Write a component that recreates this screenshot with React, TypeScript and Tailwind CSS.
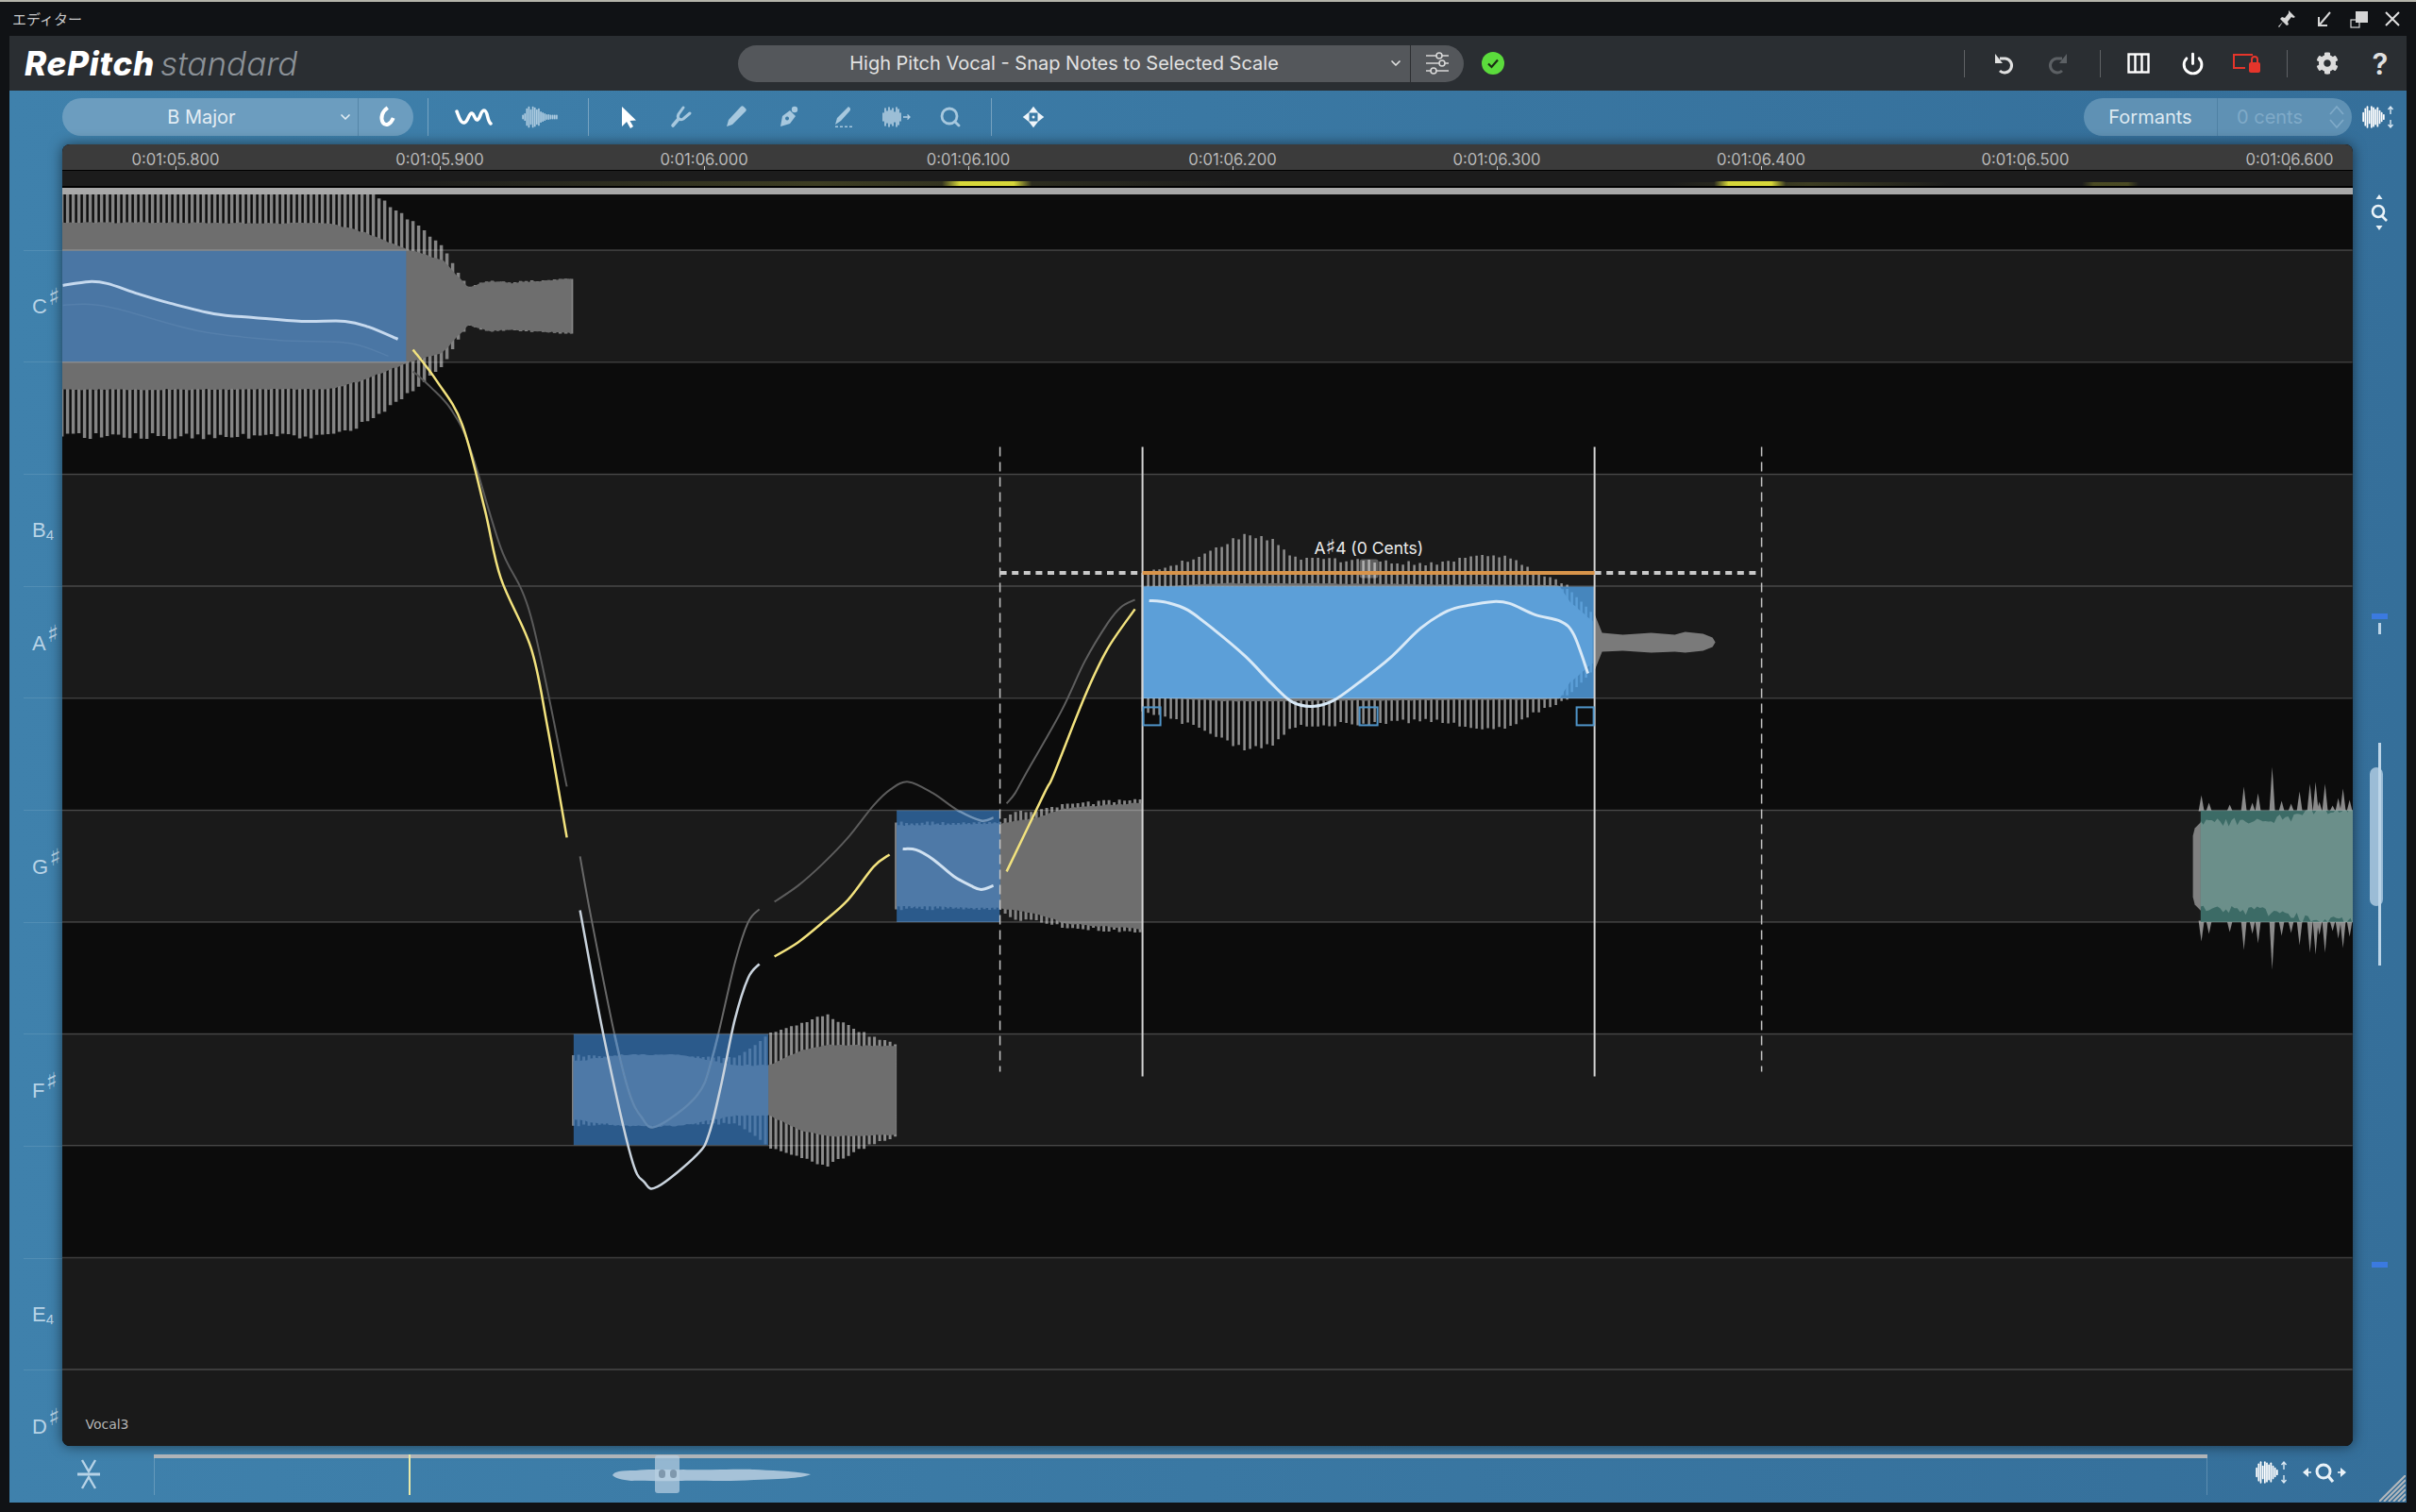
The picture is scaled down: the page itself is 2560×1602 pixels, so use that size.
import { Power, Search, ChevronDown } from 'lucide-react';
import { FaCog } from 'react-icons/fa';

type P = [number, number];

const GRID_LINES = [264.6, 383.3, 502, 620.7, 739.4, 858, 976.7, 1095, 1213.4, 1332, 1450.6];

const ROWS: { h: number; light: boolean }[] = [
  { h: 59, light: false },
  { h: 118.7, light: true },
  { h: 118.7, light: false },
  { h: 118.7, light: true },
  { h: 118.7, light: true },
  { h: 118.7, light: false },
  { h: 118.7, light: true },
  { h: 118.7, light: false },
  { h: 118.7, light: true },
  { h: 118.7, light: false },
  { h: 118.7, light: true },
  { h: 118.7, light: true },
];

const GUTTER_LABELS: { name?: string; sharp?: boolean; sub?: string }[] = [
  { name: 'C', sharp: true },
  {},
  { name: 'B', sub: '4' },
  { name: 'A', sharp: true },
  {},
  { name: 'G', sharp: true },
  {},
  { name: 'F', sharp: true },
  {},
  { name: 'E', sub: '4' },
  { name: 'D', sharp: true },
];

const TIMES = [
  '0:01:05.800',
  '0:01:05.900',
  '0:01:06.000',
  '0:01:06.100',
  '0:01:06.200',
  '0:01:06.300',
  '0:01:06.400',
  '0:01:06.500',
  '0:01:06.600',
];

const rnd = (n: number) => {
  const v = Math.sin(n * 12.9898) * 43758.5453;
  return v - Math.floor(v);
};

const lerp = (pts: P[], x: number) => {
  if (x <= pts[0][0]) return pts[0][1];
  for (let i = 1; i < pts.length; i++) {
    if (x <= pts[i][0]) {
      const t = (x - pts[i - 1][0]) / (pts[i][0] - pts[i - 1][0]);
      return pts[i - 1][1] + (pts[i][1] - pts[i - 1][1]) * t;
    }
  }
  return pts[pts.length - 1][1];
};

// catmull-rom through "x,y x,y" so the pitch curves don't look like polylines
function smooth(points: string) {
  const p = points.split(' ').map((s) => s.split(',').map(Number));
  let d = `M${p[0][0]} ${p[0][1]}`;
  for (let i = 0; i < p.length - 1; i++) {
    const a = p[Math.max(i - 1, 0)];
    const b = p[i];
    const c = p[i + 1];
    const e = p[Math.min(i + 2, p.length - 1)];
    const c1x = b[0] + (c[0] - a[0]) / 6;
    const c1y = b[1] + (c[1] - a[1]) / 6;
    const c2x = c[0] - (e[0] - b[0]) / 6;
    const c2y = c[1] - (e[1] - b[1]) / 6;
    d += `C${c1x.toFixed(1)} ${c1y.toFixed(1)} ${c2x.toFixed(1)} ${c2y.toFixed(1)} ${c[0]} ${c[1]}`;
  }
  return d;
}

// solid part of a waveform, both sides of the center line
function corePoints(env: P[], cy: number, jitter: number) {
  const x0 = env[0][0];
  const x1 = env[env.length - 1][0];
  const top: string[] = [];
  const bottom: string[] = [];
  for (let x = x0; x <= x1; x += 3) {
    const a = lerp(env, x);
    top.push(`${x},${(cy - a - rnd(x) * jitter).toFixed(1)}`);
    bottom.unshift(`${x},${(cy + a + rnd(x + 7) * jitter).toFixed(1)}`);
  }
  return [...top, ...bottom].join(' ');
}

// thin peaks that stick out of the solid part
function combPath(env: P[], cy: number, step: number) {
  const x0 = env[0][0];
  const x1 = env[env.length - 1][0];
  let d = '';
  for (let x = x0; x <= x1; x += step) {
    const a = lerp(env, x) * (0.95 + rnd(x) * 0.05);
    d += `M${x} ${(cy - a).toFixed(1)}V${(cy + a).toFixed(1)}`;
  }
  return d;
}

function Wave(props: {
  outer: P[];
  inner: P[];
  cy: number;
  step: number;
  fill: string;
  line: string;
  width?: number;
  jitter?: number;
}) {
  return (
    <g>
      <path d={combPath(props.outer, props.cy, props.step)} stroke={props.line} strokeWidth={props.width ?? 3} fill="none" />
      <polygon points={corePoints(props.inner, props.cy, props.jitter ?? 1.5)} fill={props.fill} />
    </g>
  );
}

const C_OUT: P[] = [[66, 141], [350, 141], [385, 128], [430, 98], [470, 65], [485, 37], [497, 21], [520, 28], [540, 26], [607, 30]];
const C_IN: P[] = [[66, 88], [350, 87], [385, 78], [430, 60], [470, 48], [485, 31], [497, 19], [520, 26], [540, 24], [607, 28]];
const F_OUT: P[] = [[608, 38], [780, 36], [800, 48], [815, 62], [850, 74], [877, 81], [899, 70], [925, 58], [950, 50]];
const F_IN: P[] = [[608, 30], [660, 37], [720, 37], [780, 26], [815, 26], [850, 42], [877, 48], [950, 46]];
const G_OUT: P[] = [[950, 47], [1060, 47], [1075, 58], [1100, 60], [1127, 66], [1150, 68], [1211, 73]];
const G_IN: P[] = [[950, 42], [1060, 44], [1100, 50], [1127, 60], [1150, 62], [1211, 66]];
const AS_OUT: P[] = [[1211, 77], [1259, 88], [1300, 107], [1320, 118], [1345, 113], [1365, 97], [1380, 90], [1450, 88], [1520, 85], [1560, 93], [1600, 92], [1620, 80], [1650, 67], [1665, 60], [1690, 30]];
const AS_IN: P[] = [[1211, 58], [1300, 62], [1350, 62], [1650, 60], [1664, 56], [1690, 28]];
const AS_LIGHT_OUT: P[] = [[1211, 62], [1650, 61], [1665, 56], [1690, 28]];
const AS_LIGHT_IN: P[] = [[1211, 62], [1652, 61], [1664, 42], [1690, 20]];

const TEAL_SPIKES: P[] = [
  [2333, 75], [2341, 67], [2363, 65], [2378, 84], [2387, 67], [2393, 77], [2408, 105], [2418, 69], [2437, 79],
  [2448, 87], [2454, 89], [2464, 87], [2478, 72], [2483, 82], [2428, 66], [2458, 68], [2472, 64], [2490, 70],
];

const GRAY_LINES = [
  { d: '438,393 457,410 478,433 498,473 531,580 563,653 601,833', stroke: '#5a5a5a' },
  { d: '615,907 627,973 651,1093 667,1157 680,1183 696,1193 739,1160 756,1117 779,1020 793,977 805,963', stroke: '#686868' },
  { d: '821,955 846,938 872,915 899,887 926,853 944,836 963,828 989,840 1015,858 1040,869 1053,866', stroke: '#5c5c5c' },
  { d: '1067,851 1076,840 1087,820 1125,753 1150,700 1174,660 1188,643 1203,635', stroke: '#5f5f5f' },
];

const YELLOW_LINES = [
  '438,370 463,403 490,449 514,539 531,612 563,686 580,767 601,887',
  '821,1013 846,998 872,977 899,953 926,918 943,905',
  '1067,923 1107,840 1117,820 1150,737 1174,687 1203,645',
];

function Canvas() {
  const selectedLine =
    '1218,636 1237,638 1259,646 1287,667 1320,695 1347,723 1369,743 1391,748 1413,742 1440,723 1473,697 1506,665 1534,647 1556,641 1583,637 1600,639 1627,651 1654,658 1668,672 1683,713';
  return (
    <svg className="absolute inset-0 w-full h-full" viewBox="66.4 205.6 2426.3 1326.4">
      <defs>
        <clipPath id="note-c"><rect x="66" y="265" width="365" height="118" /></clipPath>
        <clipPath id="note-f"><rect x="608" y="1095" width="206.5" height="118" /></clipPath>
        <clipPath id="note-g"><rect x="950.5" y="858" width="109.5" height="118.5" /></clipPath>
        <clipPath id="note-as"><rect x="1211" y="621" width="479" height="118.5" /></clipPath>
        <clipPath id="note-t"><rect x="2332" y="858" width="162" height="118.5" /></clipPath>
      </defs>

      {/* first note */}
      <Wave outer={C_OUT} inner={C_IN} cy={324} step={6} fill="#6e6e6e" line="#858585" width={3.5} />
      <g clipPath="url(#note-c)">
        <rect x="66" y="265" width="365" height="118" fill="#4a76a4" />
      </g>
      <path d={smooth('67,302 95,298 114,300 147,311 181,321 227,332 269,336 320,340 366,340 391,346 422,359')} fill="none" stroke="#c6d9ee" strokeWidth="3" />
      <path d={smooth('67,323 95,322 126,327 210,350 295,360 370,363 412,377')} fill="none" stroke="#557fab" strokeWidth="1.5" />

      {/* F sharp */}
      <Wave outer={F_OUT} inner={F_IN} cy={1155} step={5.5} fill="#6e6e6e" line="#8c8c8c" />
      <g clipPath="url(#note-f)">
        <rect x="608" y="1095" width="207" height="118" fill="#2b5a8b" />
        <Wave outer={F_OUT} inner={F_IN} cy={1155} step={5.5} fill="#4e79a7" line="#4e79a7" />
      </g>

      {/* G sharp */}
      <Wave outer={G_OUT} inner={G_IN} cy={917} step={5.5} fill="#6e6e6e" line="#858585" />
      <g clipPath="url(#note-g)">
        <rect x="950" y="858" width="110" height="119" fill="#2b5a8b" />
        <Wave outer={G_OUT} inner={G_IN} cy={917} step={5.5} fill="#4e79a7" line="#4e79a7" />
      </g>

      {/* selected note */}
      <Wave outer={AS_OUT} inner={AS_IN} cy={680} step={6} fill="#707070" line="#8f8f8f" width={2.5} jitter={1} />
      <g clipPath="url(#note-as)">
        <rect x="1211" y="620" width="480" height="120" fill="#4686bd" />
        <Wave outer={AS_LIGHT_OUT} inner={AS_LIGHT_IN} cy={680} step={5} fill="#5c9fd8" line="#5c9fd8" width={2.5} jitter={1} />
      </g>
      <polygon points="1690,650 1698,670 1720,672 1750,670 1775,672 1786,669 1805,671 1815,675 1818,680 1815,685 1805,689 1786,691 1775,690 1750,691 1720,689 1698,690 1690,710" fill="#7a7a7a" />

      {/* note at the right edge */}
      <polygon points="2324,885 2326,877 2333,870 2333,965 2326,958 2324,950" fill="#808080" />
      {TEAL_SPIKES.map(([x, a]) => (
        <g key={x} fill="#8a8a8a">
          <polygon points={`${x - 3},${917 - 58} ${x},${917 - a} ${x + 3},${917 - 58}`} />
          <polygon points={`${x - 3},${917 + 58} ${x},${917 + a + 5} ${x + 3},${917 + 58}`} />
        </g>
      ))}
      <g clipPath="url(#note-t)">
        <rect x="2332" y="858" width="162" height="119" fill="#3c6b66" />
        <polygon points={corePoints([[2332, 40], [2400, 43], [2432, 46], [2445, 53], [2494, 54]], 917, 10)} fill="#6b8f8a" />
      </g>

      {/* grid lines run over the notes */}
      {GRID_LINES.map((y) => (
        <line key={y} x1="66" x2="2493" y1={y} y2={y} stroke="#fff" strokeOpacity="0.2" strokeWidth="1.5" />
      ))}

      {GRAY_LINES.map((l) => (
        <path key={l.d} d={smooth(l.d)} fill="none" stroke={l.stroke} strokeWidth="2" />
      ))}
      {/* the gray curves go faint inside a note */}
      <g clipPath="url(#note-f)">
        <path d={smooth(GRAY_LINES[1].d)} fill="none" stroke="#5f88b3" strokeWidth="2.5" />
      </g>
      <g clipPath="url(#note-g)">
        <path d={smooth(GRAY_LINES[2].d)} fill="none" stroke="#6f94ba" strokeWidth="2.5" />
      </g>
      <path d={smooth('615,964 640,1097 669,1225 683,1252 697,1257 739,1223 752,1200 765,1147 779,1080 793,1036 805,1021')} fill="none" stroke="#c9d3dd" strokeWidth="2.5" />
      <path d={smooth('957,899 971,900 989,910 1011,928 1029,938 1040,942 1053,938')} fill="none" stroke="#d0e1f1" strokeWidth="3" />
      {YELLOW_LINES.map((l) => (
        <path key={l} d={smooth(l)} fill="none" stroke="#f2e27e" strokeWidth="2.5" />
      ))}
      <path d={smooth(selectedLine)} fill="none" stroke="#d8e9f7" strokeWidth="3" />

      {/* selection frame */}
      <path d="M1060 473V1135M1867 473V1135" stroke="#c4c4c4" strokeWidth="1.5" strokeDasharray="10 6" />
      <path d="M1211 473V1140M1690 473V1140" stroke="#d4d4d4" strokeWidth="2" />
      <path d="M1060 606.7H1211M1690 606.7H1867" stroke="#c8c8c8" strokeWidth="4" strokeDasharray="7 5.6" />
      <rect x="1441" y="592" width="20" height="20" rx="3" fill="#fff" fillOpacity="0.3" />
      <path d="M1211 606.7H1690" stroke="#d8944a" strokeWidth="4" />
      <g fill="none" stroke="#4f94c8" strokeWidth="2">
        <rect x="1212" y="749" width="18" height="19" />
        <rect x="1441" y="749" width="19" height="19" />
        <rect x="1671" y="749" width="18" height="19" />
      </g>
    </svg>
  );
}

function Strip() {
  return (
    <svg className="w-full h-full block" viewBox="0 0 2426 16" preserveAspectRatio="none">
      <defs>
        <linearGradient id="glow" x1="0" x2="1" y1="0" y2="0">
          <stop offset="0" stopColor="#eaea3c" stopOpacity="0" />
          <stop offset="0.2" stopColor="#eaea3c" stopOpacity="0.9" />
          <stop offset="0.8" stopColor="#eaea3c" stopOpacity="0.9" />
          <stop offset="1" stopColor="#eaea3c" stopOpacity="0" />
        </linearGradient>
        <linearGradient id="haze" x1="0" x2="1" y1="0" y2="0">
          <stop offset="0" stopColor="#8a8a30" stopOpacity="0" />
          <stop offset="0.5" stopColor="#8a8a30" stopOpacity="0.3" />
          <stop offset="1" stopColor="#8a8a30" stopOpacity="0" />
        </linearGradient>
      </defs>
      <rect x="350" y="11" width="900" height="5" fill="url(#haze)" />
      <rect x="1700" y="12" width="300" height="4" fill="url(#haze)" />
      <rect x="932" y="11" width="95" height="5" fill="url(#glow)" />
      <rect x="1750" y="11" width="76" height="5" fill="url(#glow)" />
      <rect x="2140" y="12" width="60" height="4" fill="url(#glow)" opacity="0.25" />
    </svg>
  );
}

function MiniWave({ color, className, amps }: { color: string; className?: string; amps: number[] }) {
  return (
    <svg className={className} viewBox={`0 0 ${amps.length * 2 + 2} 24`}>
      {amps.map((a, i) => (
        <line key={i} x1={2 + i * 2} x2={2 + i * 2} y1={12 - a} y2={12 + a} stroke={color} strokeWidth="1.6" strokeLinecap="round" />
      ))}
    </svg>
  );
}

const BLOB_AMPS = [1.5, 3, 8, 10, 7, 10, 9, 7, 8, 5, 4, 3, 2, 2, 1.5, 1.5, 1.5, 1.5];
const ICON_AMPS = [4, 8, 10, 6, 10, 9, 7, 9, 6, 4, 2];

function WaveZoomIcon() {
  return (
    <div className="flex items-center">
      <MiniWave color="#ffffff" amps={ICON_AMPS} className="w-[26px] h-[28px]" />
      <svg className="w-[10px] h-[28px]" viewBox="0 0 10 28">
        <path d="M5 3V11M2.5 6L5 3L7.5 6M5 17V25M2.5 22L5 25L7.5 22" fill="none" stroke="#d9e8f3" strokeWidth="1.4" />
      </svg>
    </div>
  );
}

function ToolIcon({ children }: { children: React.ReactNode }) {
  return (
    <svg className="w-[32px] h-[32px]" viewBox="0 0 32 32" fill="#a7c8de">
      {children}
    </svg>
  );
}

function Divider({ className }: { className: string }) {
  return <div className={`w-px shrink-0 ${className}`} />;
}

function Header() {
  return (
    <div className="h-[58px] shrink-0 flex items-center bg-[#2a2e32]">
      <div className="w-[772px] shrink-0 pl-[16px] flex items-baseline gap-[6px] text-[35px] leading-none italic">
        <span className="font-extrabold text-white tracking-[0.8px]">RePitch</span>
        <span className="font-light text-[#8c9298]">standard</span>
      </div>
      <div className="w-[769px] h-[39px] shrink-0 rounded-full bg-[#54575b] flex items-center text-[#e2e2e2]">
        <span className="w-[712px] shrink-0 pl-[8px] flex items-center">
          <span className="flex-1 text-center text-[20px] leading-none">High Pitch Vocal - Snap Notes to Selected Scale</span>
          <ChevronDown className="w-[16px] h-[16px] ml-[6px] mr-[7px]" strokeWidth={2.5} />
        </span>
        <Divider className="h-[39px] bg-[#2c2e31]" />
        <svg className="w-[56px] h-[26px]" viewBox="0 0 56 26" fill="none" stroke="#d8d8d8" strokeWidth="1.6">
          <path d="M16 5H40M16 13H40M16 21H40" />
          <circle cx="30" cy="5" r="3" fill="#54575b" />
          <circle cx="33" cy="13" r="3" fill="#54575b" />
          <circle cx="24" cy="21" r="3" fill="#54575b" />
        </svg>
      </div>
      <svg className="w-[24px] h-[24px] ml-[19px]" viewBox="0 0 24 24">
        <circle cx="12" cy="12" r="12" fill="#5bdb3c" />
        <path d="M7 12.5L10.5 16L17 8.5" fill="none" stroke="#1a2a14" strokeWidth="2.2" />
      </svg>
      <Divider className="h-[29px] bg-white/25 ml-[487px]" />
      <div className="w-[36px] ml-[24px] flex justify-center">
        <svg className="w-[26px] h-[26px]" viewBox="0 0 26 26" fill="none" stroke="#e0e0e0" strokeWidth="3">
          <path d="M8 8H14A7.5 7.5 0 1 1 8 21" />
          <path d="M3 3V13H11Z" fill="#e0e0e0" strokeWidth="0" />
        </svg>
      </div>
      <div className="w-[36px] ml-[20px] flex justify-center">
        <svg className="w-[26px] h-[26px]" viewBox="0 0 26 26" fill="none" stroke="#5c6064" strokeWidth="3">
          <path d="M18 8H12A7.5 7.5 0 1 0 18 21" />
          <path d="M23 3V13H15Z" fill="#5c6064" strokeWidth="0" />
        </svg>
      </div>
      <Divider className="h-[29px] bg-white/25 ml-[27px]" />
      <div className="w-[36px] ml-[22px] flex justify-center">
        <svg className="w-[24px] h-[22px]" viewBox="0 0 24 22" fill="none" stroke="#fff" strokeWidth="2.4">
          <rect x="1.5" y="1.5" width="21" height="19" />
          <path d="M8.5 1.5V20.5M15.5 1.5V20.5" />
        </svg>
      </div>
      <div className="w-[36px] ml-[21px] flex justify-center"><Power className="w-[25px] h-[25px] text-white" strokeWidth={2.8} /></div>
      <div className="w-[36px] ml-[22px] flex justify-center">
        <svg className="w-[32px] h-[24px]" viewBox="0 0 32 24" fill="none">
          <path d="M22 3H2V17H14" stroke="#e5352b" strokeWidth="2" />
          <rect x="18" y="11" width="12" height="11" rx="2" fill="#e5352b" />
          <path d="M21 11V8a3 3 0 0 1 6 0V11" stroke="#e5352b" strokeWidth="2" />
        </svg>
      </div>
      <Divider className="h-[29px] bg-white/25 ml-[24px]" />
      <div className="w-[36px] ml-[24px] flex justify-center"><FaCog className="w-[24px] h-[24px] text-[#dcdcdc]" /></div>
      <div className="w-[36px] ml-[20px] text-center text-[31px] leading-none font-semibold text-[#e0e0e0]">?</div>
    </div>
  );
}

function Toolbar() {
  return (
    <div className="h-[57px] shrink-0 flex items-center pb-[1px] pl-[56.4px] pr-[12px]">
      <div className="w-[371.6px] h-[40px] shrink-0 rounded-full bg-[#6c9dbf] flex items-center text-[#e3edf4]">
        <span className="w-[313px] shrink-0 flex items-center">
          <span className="flex-1 text-center text-[20px] leading-none pl-[2px]">B Major</span>
          <ChevronDown className="w-[16px] h-[16px] mr-[5px]" strokeWidth={2.5} />
        </span>
        <Divider className="h-[40px] bg-[#5586a8]" />
        <svg className="w-[58px] h-[26px]" viewBox="0 0 58 26" fill="none">
          <path d="M31 3C25 7 23 14 26 19C29 23 34 21 37 14" stroke="#fff" strokeWidth="4" />
        </svg>
      </div>
      <Divider className="h-[40px] bg-white/30 ml-[15px]" />
      <svg className="w-[40px] h-[26px] ml-[28px]" viewBox="0 0 40 26" fill="none">
        <path d="M2 7C4 12 6 20 10 19C14 18 15 8 18 9C21 10 21 17 24 16C27 15 27 6 31 6C35 6 34 17 38 20" stroke="#fff" strokeWidth="3.5" strokeLinecap="round" />
      </svg>
      <MiniWave color="#adcbe0" amps={BLOB_AMPS} className="w-[40px] h-[26px] ml-[30px]" />
      <Divider className="h-[40px] bg-white/30 ml-[31px]" />
      <div className="ml-[24px]">
        <ToolIcon><path d="M11 5V26L16 21L20 28L23 26L19.5 20L26 19.5Z" fill="#fff" /></ToolIcon>
      </div>
      <div className="ml-[25px]">
        <svg className="w-[32px] h-[32px]" viewBox="0 0 32 32" fill="none" stroke="#a7c8de" strokeWidth="3" strokeLinecap="round">
          <path d="M19 6L14 13C12 17 15 20 19 18L26 12" />
          <path d="M8 25L14 18" strokeWidth="3.6" />
        </svg>
      </div>
      <div className="ml-[26px]">
        <ToolIcon><path d="M22 5C23 4 24 4 25 5L27 7C28 8 28 9 27 10L13 24L7 26L9 19Z" /></ToolIcon>
      </div>
      <div className="ml-[24px]">
        <ToolIcon>
          <circle cx="23" cy="8" r="3.2" />
          <path d="M8 26L10 15L18 9L24 15L18 23ZM15 15.5A2 2 0 1 0 15.1 15.5Z" fillRule="evenodd" />
        </ToolIcon>
      </div>
      <div className="ml-[26px]">
        <ToolIcon><path d="M22 5C24 6 25 8 23 10L14 20L8 24L10 17ZM8 25.5H11V27H8ZM13 25.5H16V27H13ZM18 25.5H21V27H18ZM23 25.5H26V27H23Z" /></ToolIcon>
      </div>
      <div className="ml-[24px] flex items-center w-[32px]">
        <MiniWave color="#b5d0e3" amps={[4, 9, 6, 10, 7, 9, 5, 10, 8, 4]} className="w-[24px] h-[24px]" />
        <svg className="w-[8px] h-[10px]" viewBox="0 0 8 10" fill="none" stroke="#b5d0e3" strokeWidth="1.3">
          <path d="M0 5H7M4.5 2.5L7 5L4.5 7.5" />
        </svg>
      </div>
      <div className="ml-[26px] w-[32px] flex justify-center"><Search className="w-[24px] h-[24px] text-[#a7c8de]" strokeWidth={2.8} /></div>
      <Divider className="h-[40px] bg-white/30 ml-[27px]" />
      <svg className="w-[24px] h-[24px] ml-[32px]" viewBox="0 0 32 32" fill="#eef5fa">
        <path d="M16 1L23 10H9ZM16 31L9 22H23ZM1 16L10 9V23ZM31 16L22 23V9Z" />
        <circle cx="16" cy="16" r="2" />
      </svg>
      <div className="ml-auto w-[284px] h-[40px] shrink-0 rounded-full bg-[#5f91b4] flex items-center">
        <span className="w-[141px] shrink-0 text-center text-[20px] leading-none text-[#dde9f1]">Formants</span>
        <Divider className="h-[40px] bg-[#4f81a4]" />
        <span className="flex-1 text-center text-[20px] leading-none pr-[6px] text-[#7faac8]">0 cents</span>
        <svg className="w-[20px] h-[30px] mr-[6px]" viewBox="0 0 20 30" fill="none" stroke="#7faac8" strokeWidth="1.8">
          <path d="M3 12L10 4L17 12M3 18L10 26L17 18" />
        </svg>
      </div>
      <div className="w-[36px] ml-[10px] flex justify-center"><WaveZoomIcon /></div>
    </div>
  );
}

function LeftGutter() {
  return (
    <div className="w-[56.4px] shrink-0 pt-[111.6px] flex flex-col text-[#b8d3e6] [font-family:'Liberation_Sans',sans-serif]">
      {GUTTER_LABELS.map((l, i) => (
        <div key={i} className="h-[118.7px] shrink-0 ml-[15px] pt-[2px] border-t border-white/10 flex items-center pl-[9px]">
          {l.name && (
            <span className="flex items-start text-[22px] leading-none">
              {l.name}
              {l.sharp && <span className="text-[25px] ml-[1px] -mt-[12px] [font-family:'DejaVu_Sans',sans-serif]">♯</span>}
              {l.sub && <span className="text-[15px] mt-[8px]">{l.sub}</span>}
            </span>
          )}
        </div>
      ))}
    </div>
  );
}

function RightGutter() {
  return (
    <div className="w-[57.3px] shrink-0 pt-[52px] flex flex-col items-center">
      <svg className="w-[24px] h-[40px]" viewBox="0 0 24 40" fill="none" stroke="#e9f2f8" strokeWidth="2.6">
        <path d="M12 1L8.5 6H15.5Z" fill="#e9f2f8" strokeWidth="0" />
        <circle cx="11" cy="19" r="6" />
        <path d="M15 24L20 29" />
        <path d="M12 39L8.5 34H15.5Z" fill="#e9f2f8" strokeWidth="0" />
      </svg>
      <div className="mt-[405px] w-[17px] h-[6px] bg-[#3b7ae0]" />
      <div className="mt-[4px] w-[3px] h-[12px] bg-[#bcd5e8]" />
      <div className="mt-[115px] w-[3px] h-[236px] bg-[#bcd5e8] relative">
        <div className="absolute -left-[9px] top-[26px] w-[14px] h-[147px] rounded-[7px] bg-[#9bbcd6]" />
        <div className="absolute left-0 top-[26px] w-[3px] h-[147px] bg-[#bcd5e8]" />
      </div>
      <div className="mt-[314px] w-[17px] h-[6px] bg-[#3b7ae0]" />
    </div>
  );
}

function BottomBar() {
  return (
    <div className="h-[60px] shrink-0 relative flex items-center">
      <svg className="w-[32px] h-[32px] ml-[68px] shrink-0" viewBox="0 0 32 32" fill="none" stroke="#b6d2e6" strokeWidth="2.4">
        <path d="M4 16H28" strokeWidth="3" />
        <path d="M9 1L16 13L23 1M9 31L16 19L23 31" />
      </svg>
      <div className="w-[2176px] h-[43px] ml-[53px] shrink-0 relative border-x border-white/20">
        <div className="h-[4px] -mx-px bg-[#b0b4b8]" />
        <div className="absolute left-[269px] top-0 w-[2px] h-[43px] bg-[#e8e8a8]" />
        <svg className="absolute left-[485px] top-[14px] w-[210px] h-[16px]" viewBox="0 0 210 16" fill="#a6c2d8">
          <path d="M0 8C2 4 8 3 25 3C40 1 60 3 75 2C100 3 140 1 150 2C165 3 190 3 210 7C205 10 190 12 150 13C120 15 90 13 70 14C50 15 30 13 20 14C10 13 2 11 0 8Z" />
        </svg>
        <div className="absolute left-[530px] top-[1px] w-[26px] h-[40px] rounded-[3px] bg-[#b9d0e2]/70 flex items-center justify-center gap-[5px]">
          <div className="w-[7px] h-[9px] rounded-full bg-[#7f98ad]" />
          <div className="w-[7px] h-[9px] rounded-full bg-[#7f98ad]" />
        </div>
      </div>
      <div className="ml-[50px] mb-[4px] shrink-0"><WaveZoomIcon /></div>
      <svg className="w-[48px] h-[26px] ml-[14px] mb-[4px] shrink-0" viewBox="0 0 48 26" fill="#e9f2f8" stroke="#e9f2f8">
        <path d="M1 13L7 8V18Z" strokeWidth="0" />
        <path d="M6 13H10" strokeWidth="1.6" />
        <path d="M47 13L41 8V18Z" strokeWidth="0" />
        <path d="M38 13H42" strokeWidth="1.6" />
        <circle cx="23" cy="12" r="7" fill="none" strokeWidth="3" />
        <path d="M28 17L33 23" strokeWidth="3.2" />
      </svg>
      <svg className="absolute right-[1px] bottom-[1px] w-[28px] h-[28px]" viewBox="0 0 28 28" stroke="#b4b8bc" strokeWidth="2">
        <path d="M28 0L0 28M28 5L5 28M28 10L10 28M28 15L15 28M28 20L20 28M28 25L25 28" />
      </svg>
    </div>
  );
}

export default function App() {
  return (
    <div className="w-[2560px] h-[1602px] overflow-hidden bg-[#101215] [font-family:Inter,sans-serif]">
      <div className="h-[2px] bg-[#b4b4aa]" />
      <div className="h-[36px] flex items-center pl-[13px] pr-[15px] text-[#c8c8c8]">
        <span className="text-[15px] [font-family:'Noto_Sans_CJK_JP',sans-serif]">エディター</span>
        <svg className="w-[22px] h-[22px] ml-auto" viewBox="0 0 22 22" fill="#d6d6d6">
          <path d="M13 2L20 9L18 10L16 9L12 14L13 17L11 18L4 11L6 9L9 10L13 5Z" />
          <path d="M7 14L3 20L2 19Z" />
        </svg>
        <svg className="w-[22px] h-[22px] ml-[18px]" viewBox="0 0 22 22" fill="none" stroke="#d6d6d6" strokeWidth="2">
          <path d="M17 4L6 17M5 9V18H14" />
        </svg>
        <svg className="w-[24px] h-[22px] ml-[14px]" viewBox="0 0 24 22">
          <rect x="3" y="12" width="9" height="8" fill="none" stroke="#d6d6d6" strokeWidth="1.2" />
          <rect x="8" y="3" width="13" height="12" fill="#d6d6d6" />
        </svg>
        <svg className="w-[20px] h-[20px] ml-[13px]" viewBox="0 0 20 20" fill="none" stroke="#e0e0e0" strokeWidth="2">
          <path d="M3 3L17 17M17 3L3 17" />
        </svg>
      </div>
      <div className="ml-[10px] w-[2540px] h-[1554px] flex flex-col bg-linear-to-r from-[#3f81ac] to-[#356f9a]">
        <Header />
        <Toolbar />
        <div className="h-[1379px] shrink-0 flex">
          <LeftGutter />
          <div className="flex-1 min-w-0 flex flex-col rounded-[8px] overflow-hidden bg-black shadow-[0_0_14px_rgba(0,0,0,0.55)] relative">
            <div className="h-[27px] shrink-0 bg-[#3b3b3b] flex overflow-hidden">
              <div className="flex -ml-[20.4px]">
                {TIMES.map((t) => (
                  <div key={t} className="w-[280px] shrink-0 flex flex-col items-center pt-[9px]">
                    <span className="text-[16.6px] leading-[14px] text-[#b8b8b8]">{t}</span>
                    <div className="w-px h-[4px] bg-[#c8c8c8]" />
                  </div>
                ))}
              </div>
            </div>
            <div className="h-[1px] shrink-0 bg-black" />
            <div className="h-[16px] shrink-0 bg-[#1c1c1c]"><Strip /></div>
            <div className="h-[2px] shrink-0 bg-black" />
            <div className="h-[6.6px] shrink-0 bg-[#a9a9a9]" />
            <div className="flex-1 min-h-0 relative overflow-hidden">
              {ROWS.map((r, i) => (
                <div key={i} className={r.light ? 'bg-[#1a1a1a]' : 'bg-[#0c0c0c]'} style={{ height: r.h }} />
              ))}
              <Canvas />
              <div className="absolute left-[1326px] top-[365px] text-[17.5px] leading-[18px] text-[#ececec] whitespace-nowrap">
                A<span className="text-[22px] leading-[18px] [font-family:'DejaVu_Sans',sans-serif]">♯</span>4 (0 Cents)
              </div>
              <div className="absolute left-[24px] top-[1295px] text-[14px] leading-[16px] text-[#b4b4b4] [font-family:'DejaVu_Sans',sans-serif] whitespace-nowrap">
                Vocal3
              </div>
            </div>
          </div>
          <RightGutter />
        </div>
        <BottomBar />
      </div>
    </div>
  );
}
